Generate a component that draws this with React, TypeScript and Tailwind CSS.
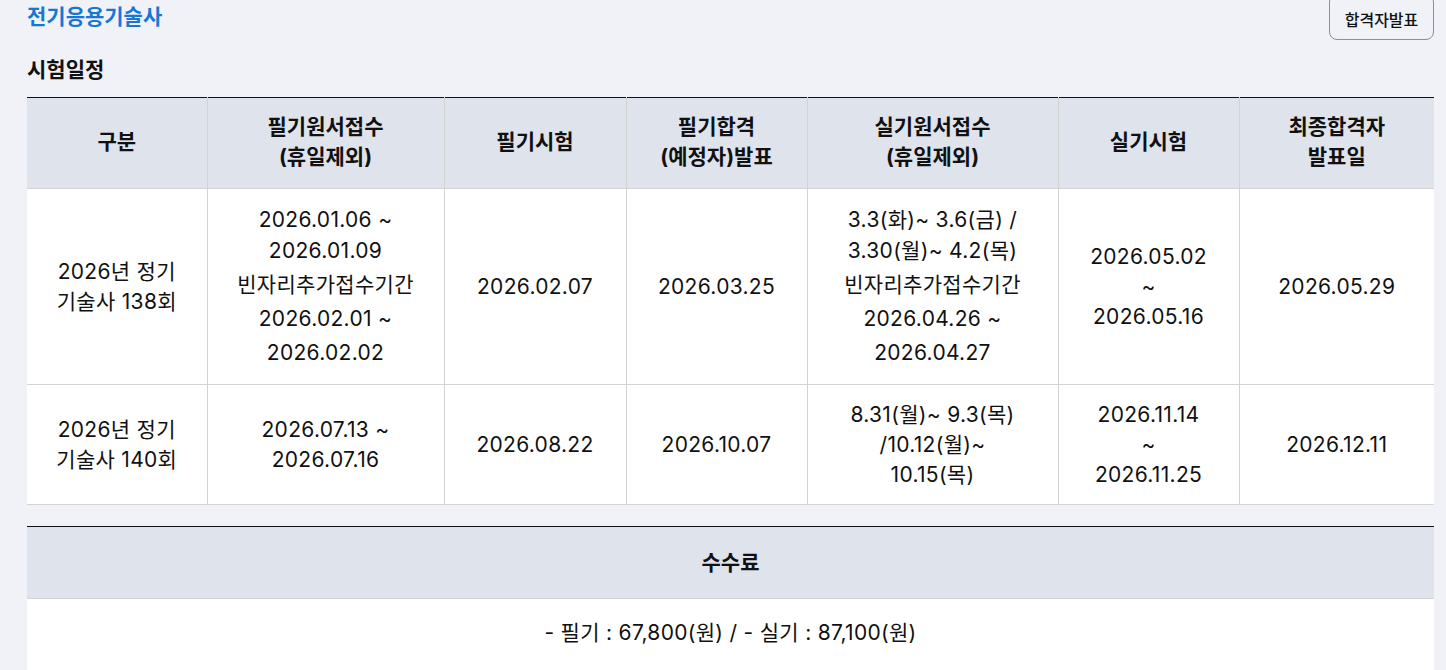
import React from "react";

const font = { fontFamily: '"Inter", "Noto Sans CJK KR", sans-serif' };

const cols = [180, 237, 182, 181, 251, 181, 195];

const headers: string[][] = [
  ["구분"],
  ["필기원서접수", "(휴일제외)"],
  ["필기시험"],
  ["필기합격", "(예정자)발표"],
  ["실기원서접수", "(휴일제외)"],
  ["실기시험"],
  ["최종합격자", "발표일"],
];

type Cell = { lines: string[]; extra?: string[] };

const rows: Cell[][] = [
  [
    { lines: ["2026년 정기", "기술사 138회"] },
    { lines: ["2026.01.06 ~", "2026.01.09"], extra: ["빈자리추가접수기간", "2026.02.01 ~", "2026.02.02"] },
    { lines: ["2026.02.07"] },
    { lines: ["2026.03.25"] },
    { lines: ["3.3(화)~ 3.6(금) /", "3.30(월)~ 4.2(목)"], extra: ["빈자리추가접수기간", "2026.04.26 ~", "2026.04.27"] },
    { lines: ["2026.05.02", "~", "2026.05.16"] },
    { lines: ["2026.05.29"] },
  ],
  [
    { lines: ["2026년 정기", "기술사 140회"] },
    { lines: ["2026.07.13 ~", "2026.07.16"] },
    { lines: ["2026.08.22"] },
    { lines: ["2026.10.07"] },
    { lines: ["8.31(월)~ 9.3(목)", "/10.12(월)~", "10.15(목)"] },
    { lines: ["2026.11.14", "~", "2026.11.25"] },
    { lines: ["2026.12.11"] },
  ],
];

export default function App() {
  return (
    <div
      style={font}
      className="min-h-[670px] w-[1446px] overflow-hidden bg-[#f0f2f7] pl-[27px] pr-[12px] text-[#111111]"
    >
      <div className="flex items-start justify-between">
        <h1 className="pt-[3px] text-[21px] font-bold leading-[28px] text-[#1877d4]">
          전기응용기술사
        </h1>
        <button className="-mt-[6px] h-[46px] w-[105px] rounded-[8px] border border-[#8f8f8f] bg-transparent pt-[5px] text-[16px] font-medium text-[#111111]">
          합격자발표
        </button>
      </div>
      <h2 className="mt-[16px] text-[21px] font-bold leading-[28px]">시험일정</h2>

      <table className="mt-[13px] w-full border-collapse border-t border-t-[#111111] text-center text-[21px] tracking-[0.3px]">
        <colgroup>
          {cols.map((w, i) => (
            <col key={i} style={{ width: w }} />
          ))}
        </colgroup>
        <thead>
          <tr className="h-[91px] bg-[#dfe3ec]">
            {headers.map((h, i) => (
              <th
                key={i}
                className={`border-b border-[#d3d3d3] px-1 pb-[2px] align-middle font-bold tracking-normal ${
                  i > 0 ? "border-l" : ""
                }`}
              >
                {h.map((l, j) => (
                  <div key={j} className="leading-[30px]">
                    {l}
                  </div>
                ))}
              </th>
            ))}
          </tr>
        </thead>
        <tbody className="bg-white">
          {rows.map((r, ri) => (
            <tr key={ri} className={ri === 0 ? "h-[196px]" : "h-[120px]"}>
              {r.map((c, ci) => (
                <td
                  key={ci}
                  className={`border-b border-[#d3d3d3] px-1 py-[14px] align-middle ${
                    ci > 0 ? "border-l" : ""
                  }`}
                >
                  {c.lines.map((l, j) => (
                    <div key={j} className={c.extra ? "leading-[31px]" : "leading-[30px]"}>
                      {l}
                    </div>
                  ))}
                  {c.extra && (
                    <div className="mt-[2px]">
                      {c.extra.map((l, j) => (
                        <div key={j} className="leading-[34px]">
                          {l}
                        </div>
                      ))}
                    </div>
                  )}
                </td>
              ))}
            </tr>
          ))}
        </tbody>
      </table>

      <table className="mt-[21px] w-full border-collapse border-t border-t-[#111111] text-center text-[21px] tracking-[0.3px]">
        <thead>
          <tr className="h-[72px] bg-[#dfe3ec]">
            <th className="border-b border-[#d3d3d3] font-bold tracking-normal">수수료</th>
          </tr>
        </thead>
        <tbody className="bg-white">
          <tr className="h-[80px]">
            <td className="pt-[20px] align-top leading-[28px]">
              - 필기 : 67,800(원) / - 실기 : 87,100(원)
            </td>
          </tr>
        </tbody>
      </table>
    </div>
  );
}
